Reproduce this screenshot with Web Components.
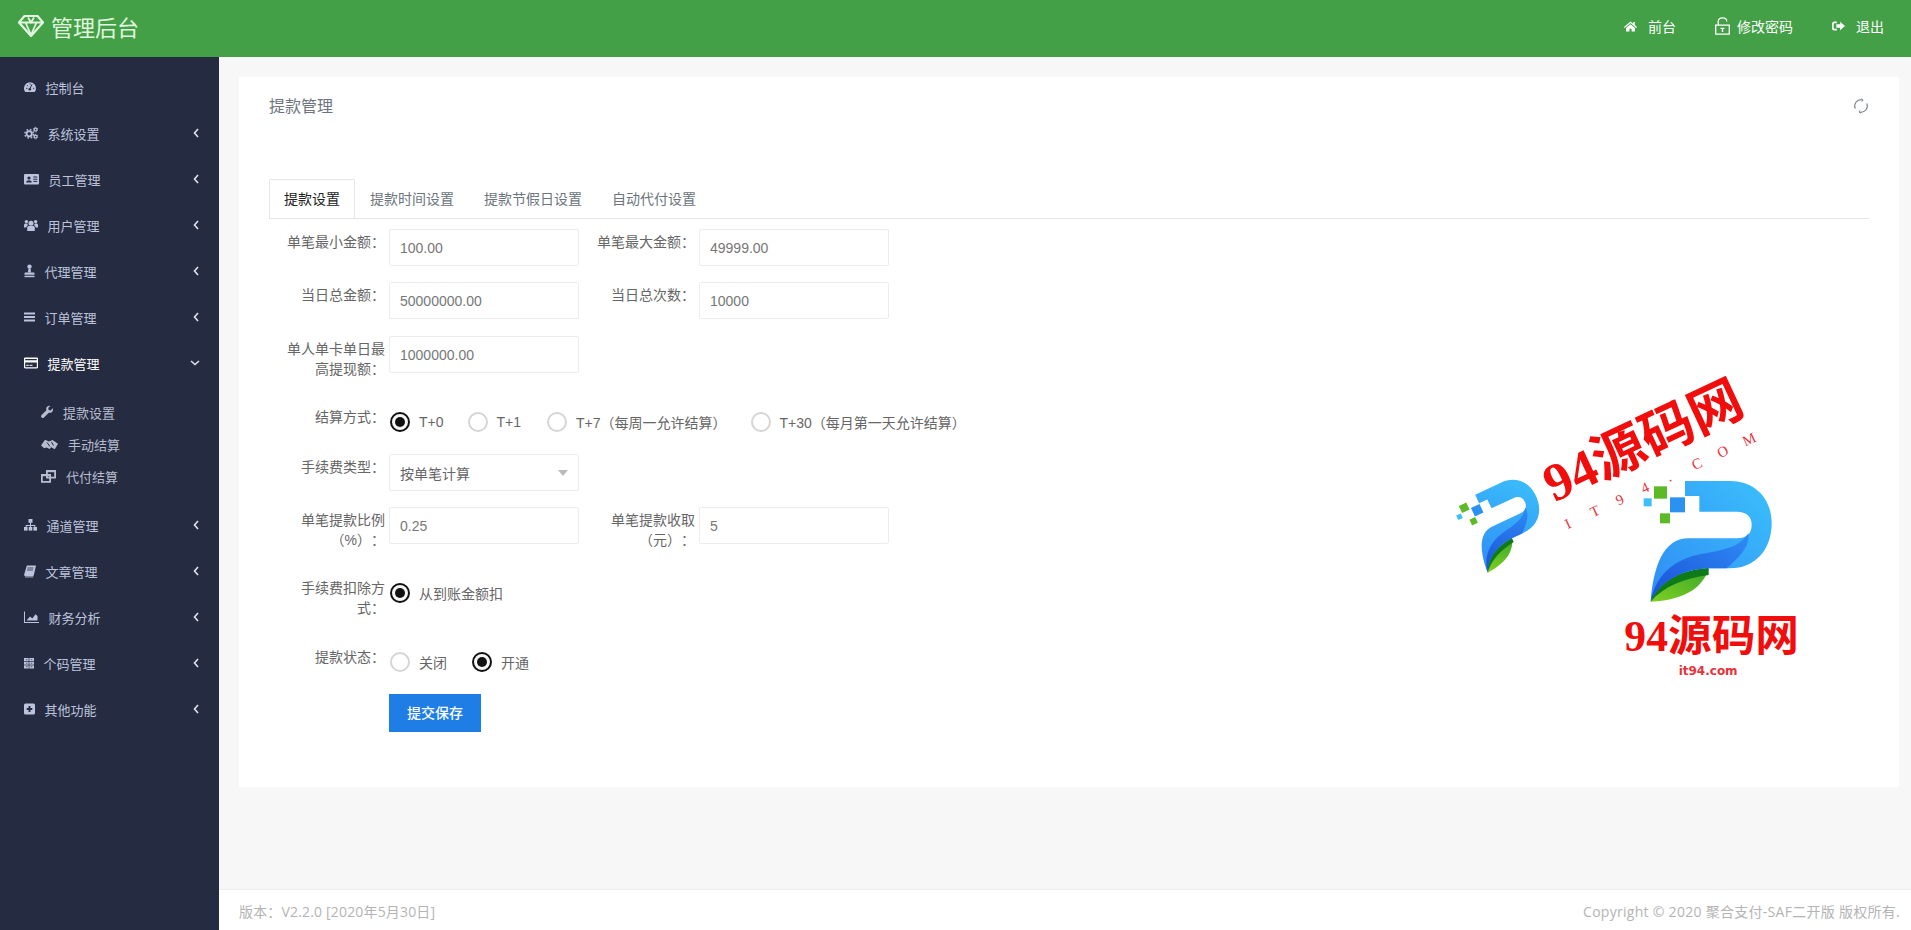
<!DOCTYPE html>
<html lang="zh">
<head>
<meta charset="utf-8">
<title>管理后台</title>
<style>
    html, body { margin: 0; height: 100%; overflow: hidden; }
    body {
        position: relative;
        font-family: "Liberation Sans", "Noto Sans CJK SC", sans-serif;
        font-size: 14px;
        background: #f7f7f7;
        text-spacing-trim: space-all;
    }
    .shell { display: grid; grid-template-rows: 57px 1fr; height: 930px; }
    .body { display: grid; grid-template-columns: 219px 1fr; min-height: 0; }
    .main { display: flex; flex-direction: column; min-width: 0; }
</style>
</head>
<body>
<div class="shell">
    <admin-header></admin-header>
    <div class="body">
        <side-nav>
            <nav-item icon="dashboard" label="控制台" plain></nav-item>
            <nav-item icon="cogs" label="系统设置"></nav-item>
            <nav-item icon="idcard" label="员工管理"></nav-item>
            <nav-item icon="users" label="用户管理"></nav-item>
            <nav-item icon="agent" label="代理管理"></nav-item>
            <nav-item icon="bars" label="订单管理"></nav-item>
            <nav-item icon="credit" label="提款管理" open>
                <nav-sub icon="wrench" label="提款设置"></nav-sub>
                <nav-sub icon="handshake" label="手动结算"></nav-sub>
                <nav-sub icon="clone" label="代付结算"></nav-sub>
            </nav-item>
            <nav-item icon="sitemap" label="通道管理"></nav-item>
            <nav-item icon="book" label="文章管理"></nav-item>
            <nav-item icon="chart" label="财务分析"></nav-item>
            <nav-item icon="qrcode" label="个码管理"></nav-item>
            <nav-item icon="plus" label="其他功能"></nav-item>
        </side-nav>
        <div class="main">
            <panel-card title="提款管理">
                <tab-bar>
                    <tab-item active>提款设置</tab-item>
                    <tab-item>提款时间设置</tab-item>
                    <tab-item>提款节假日设置</tab-item>
                    <tab-item>自动代付设置</tab-item>
                </tab-bar>
                <form-row>
                    <form-field label="单笔最小金额："><text-field>100.00</text-field></form-field>
                    <form-field label="单笔最大金额："><text-field>49999.00</text-field></form-field>
                </form-row>
                <form-row style="margin-bottom: 17px">
                    <form-field label="当日总金额："><text-field>50000000.00</text-field></form-field>
                    <form-field label="当日总次数："><text-field>10000</text-field></form-field>
                </form-row>
                <form-row>
                    <form-field label="单人单卡单日最高提现额："><text-field>1000000.00</text-field></form-field>
                </form-row>
                <form-row>
                    <form-field label="结算方式：">
                        <radio-group>
                            <radio-option checked>T+0</radio-option>
                            <radio-option style="margin-right: 2px">T+1</radio-option>
                            <radio-option>T+7（每周一允许结算）</radio-option>
                            <radio-option>T+30（每月第一天允许结算）</radio-option>
                        </radio-group>
                    </form-field>
                </form-row>
                <form-row>
                    <form-field label="手续费类型："><select-field>按单笔计算</select-field></form-field>
                </form-row>
                <form-row>
                    <form-field label="单笔提款比例（%）："><text-field>0.25</text-field></form-field>
                    <form-field label="单笔提款收取（元）："><text-field>5</text-field></form-field>
                </form-row>
                <form-row style="margin-bottom: 17px">
                    <form-field label="手续费扣除方式：">
                        <radio-group><radio-option checked>从到账金额扣</radio-option></radio-group>
                    </form-field>
                </form-row>
                <form-row>
                    <form-field label="提款状态：">
                        <radio-group>
                            <radio-option style="margin-right: 1px">关闭</radio-option>
                            <radio-option checked>开通</radio-option>
                        </radio-group>
                    </form-field>
                </form-row>
                <form-row>
                    <form-field><save-button>提交保存</save-button></form-field>
                </form-row>
            </panel-card>
            <page-footer></page-footer>
        </div>
    </div>
</div>
<water-mark></water-mark>

<script>
// icons are drawn 14 high, the width differs per icon like an icon font does
const ICONS = {
    dashboard: [12, `<path d="M6 2.2A6 6 0 0 0 0 8.2c0 1.5.5 2.8 1.3 3.8h9.4A6 6 0 0 0 12 8.2a6 6 0 0 0-6-6z"/><path d="M6 8.5 8 4.3M2 8.3h1.4M3 5.2l1 1M6 3.4v1.2M9 8.3h1.2" stroke="#252b40" stroke-width="1" fill="none"/><circle cx="5.8" cy="9.2" r="1.3" fill="#252b40"/>`],
    cogs: [14, `<g fill="none" stroke="currentColor"><circle cx="5.2" cy="7.8" r="2.6" stroke-width="1.8"/><circle cx="5.2" cy="7.8" r="4.3" stroke-width="1.5" stroke-dasharray="1.7 1.7"/><circle cx="11.6" cy="3.6" r="1.4" stroke-width="1.2"/><circle cx="11.6" cy="3.6" r="2.3" stroke-width="1" stroke-dasharray="1.1 1.1"/><circle cx="11.6" cy="10.6" r="1.4" stroke-width="1.2"/><circle cx="11.6" cy="10.6" r="2.3" stroke-width="1" stroke-dasharray="1.1 1.1"/></g>`],
    idcard: [15, `<rect y="2" width="15" height="10.5" rx="1"/><circle cx="5" cy="6" r="1.6" fill="#252b40"/><path d="M2.2 10.6c0-3 5.6-3 5.6 0z" fill="#252b40"/><path d="M9.3 5h4M9.3 7.2h4M9.3 9.4h4" stroke="#252b40" stroke-width="1"/>`],
    users: [14, `<circle cx="7" cy="5.2" r="2.5"/><path d="M3.2 13V9.8C3.2 8.4 4.4 8 5.2 8h3.6c.8 0 2 .4 2 1.8V13z"/><circle cx="2.4" cy="3.6" r="1.7"/><circle cx="11.6" cy="3.6" r="1.7"/><path d="M0 9.5V7c0-1 .8-1.6 1.6-1.6h1.6c.1.8.5 1.4 1 1.9-1 .3-1.8 1.1-1.8 2.2zM14 9.5V7c0-1-.8-1.6-1.6-1.6h-1.6c-.1.8-.5 1.4-1 1.9 1 .3 1.8 1.1 1.8 2.2z"/>`],
    agent: [11, `<circle cx="5.5" cy="2.6" r="2.2"/><path d="M4.4 4.4h2.2l.4 4H4z"/><path d="M1.5 8.6h8c.6 0 1 .4 1 1v1.2H.5V9.600c0-.6.4-1 1-1z"/><rect x=".5" y="11.700" width="10" height="1.500"/>`],
    bars: [11, `<rect y="2.500" width="11" height="2"/><rect y="6" width="11" height="2"/><rect y="9.500" width="11" height="2"/>`],
    credit: [14, `<path fill-rule="evenodd" d="M1.200 1.500h11.600c.7 0 1.200.5 1.200 1.200v8.600c0 .7-.5 1.200-1.200 1.200H1.200C.5 12.500 0 12 0 11.300V2.700c0-.7.5-1.200 1.200-1.200zM1.200 6.500v4.800h11.600V6.500zM1.200 3v1.200h11.600V3z"/><rect x="2.200" y="8.800" width="2.500" height="1"/><rect x="5.500" y="8.800" width="3" height="1"/>`],
    wrench: [12, `<path d="M11.800 3.300 9.600 5.400 7.700 5l-.5-1.900L9.300 1C7.500.4 5.500 1.500 5.200 3.400c-.1.700 0 1.300.2 1.900L.6 10.100c-.7.700-.7 1.800 0 2.400.7.700 1.700.7 2.400 0l4.800-4.800c2.300.7 4.700-1.200 4.200-4.400z"/>`],
    handshake: [17, `<path d="M0 8.500 4 2.800l4 1.600L11.500 3 17 6.800l-3.200 5.400-3.600-2-1.600 1.800-3-1.600-2.400.8z"/><path d="M6 5.500l3 4M10.500 5l2 3.500" stroke="#252b40" stroke-width="1" fill="none"/>`],
    clone: [15, `<g fill="none" stroke="currentColor" stroke-width="1.800"><rect x="5.900" y="1.900" width="8.200" height="6.700"/><rect x=".9" y="5.900" width="8.200" height="7"/></g><rect x="5" y="1" width="10" height="2.200"/><rect y="5" width="10" height="2.200"/>`],
    sitemap: [13, `<rect x="4.500" y="1" width="4" height="3.800"/><path d="M6 4.800h1v2.200h4.300v2h-1V8H7v1H6V8H2.700v1h-1V7H6z"/><rect y="9" width="3.600" height="3.600"/><rect x="4.700" y="9" width="3.600" height="3.600"/><rect x="9.400" y="9" width="3.600" height="3.600"/>`],
    book: [12, `<path d="M2.800 1.500H12L9.800 11.300c-.1.500-.5.800-1 .8H1.300c-.9 0-1.300-.7-1.100-1.500z"/><path d="M3.500 4h6M3 6h6" stroke="#252b40" stroke-width=".8"/><path d="M1 12.900h8.300" stroke="currentColor" stroke-width="1"/>`],
    chart: [15, `<path d="M0 1.500h1V12h14v1H0z"/><path d="M2.500 10.500 6 6.500l2.300 2 3.200-4.300 2 1.800v4.500z"/>`],
    qrcode: [10, `<rect y="2" width="10" height="10.500"/><path d="M0 5.500h10M0 9h10M5 2v10.500M2 3.700h1.500M6.800 3.700h1.500M2 7.200h1.500M6.800 7.200h1.500M2 10.700h1.500M6.800 10.700h1.500" stroke="#252b40" stroke-width=".7"/>`],
    plus: [11, `<rect y="1.500" width="11" height="11" rx="1.500"/><path d="M5.500 4v6M2.700 7h5.600" stroke="#252b40" stroke-width="1.900"/>`],
    home: [13, `<path d="M6.500 2.500 0 8l.8.900 5.700-4.800 5.700 4.800.8-.9-2.200-1.900V3h-1.600v1.700z"/><path d="M6.500 5.200 2 9v3.500h3.400V9.800h2.200v2.700H11V9z"/>`],
    unlock: [15, `<path fill="none" stroke="currentColor" stroke-width="1.300" d="M.7 8.200h13.600v9H.7zM3.200 8V4.500C3.200 2.300 5 .8 7.500.8s4.300 1.500 4.300 3.700"/><path d="M5.500 10.800h4v1.200h-1.300v3h-1.400v-3H5.500z"/>`],
    signout: [13, `<path d="M4.800 2.500H2.300C1 2.500 0 3.500 0 4.800v4.400c0 1.300 1 2.300 2.300 2.300h2.500v-1.700H2.500c-.4 0-.8-.3-.8-.8V5c0-.5.4-.8.8-.8h2.300z"/><path d="M8 2.800 13 7l-5 4.200V8.800H4.300V5.200H8z"/>`]
};

function iconSvg(name, height = 14) {
    const [width, body] = ICONS[name];
    const vb = name === 'unlock' ? `0 0 ${width} 18` : `0 0 ${width} 14`;
    const h = name === 'unlock' ? 18 : height;
    return `<svg width="${width}" height="${h}" viewBox="${vb}" fill="currentColor">${body}</svg>`;
}

class AdminHeader extends HTMLElement {
    constructor() {
        super();
        this.attachShadow({ mode: 'open' });
    }

    connectedCallback() {
        this.shadowRoot.innerHTML = `
            <style>
                :host {
                    display: flex;
                    align-items: center;
                    justify-content: space-between;
                    background: #43a047;
                    color: #fff;
                    padding: 0 27px 5px 18px;
                }
                .brand { display: flex; align-items: center; gap: 7px; font-size: 22px; color: #e2f7df; }
                .menu { display: flex; align-items: center; gap: 39px; font-size: 14px; }
                .menu span { display: flex; align-items: center; gap: 11px; }
                .menu .lock { gap: 7px; }
            </style>
            <div class="brand">
                <svg width="26" height="22" viewBox="0 0 26 22">
                    <path d="M6.500 1h13L25 7.500 13 21 1 7.500z" fill="none" stroke="#e2f7df" stroke-width="2.200" stroke-linejoin="round"/>
                    <path d="M1.500 7.500h23M7.500 7.500 13 20l5.500-12.500M10 2.500l3 5 3-5" fill="none" stroke="#e2f7df" stroke-width="1.800"/>
                </svg>
                <span>管理后台</span>
            </div>
            <div class="menu">
                <span>${iconSvg('home')}前台</span>
                <span class="lock">${iconSvg('unlock')}修改密码</span>
                <span>${iconSvg('signout')}退出</span>
            </div>
        `;
    }
}
customElements.define('admin-header', AdminHeader);

class SideNav extends HTMLElement {
    constructor() {
        super();
        this.attachShadow({ mode: 'open' }).innerHTML = `
            <style>
                :host {
                    display: block;
                    background: #252b40;
                    padding-top: 7px;
                    color: #bcc3dc;
                    font-size: 13px;
                }
            </style>
            <slot></slot>
        `;
    }
}
customElements.define('side-nav', SideNav);

class NavItem extends HTMLElement {
    constructor() {
        super();
        this.attachShadow({ mode: 'open' });
    }

    connectedCallback() {
        const open = this.hasAttribute('open');
        let arrow = '<svg width="6" height="10" viewBox="0 0 6 10"><path d="M5 1 1.500 5 5 9" fill="none" stroke="currentColor" stroke-width="1.600"/></svg>';
        if (open) {
            arrow = '<svg width="10" height="6" viewBox="0 0 10 6"><path d="M1 1l4 3.500L9 1" fill="none" stroke="currentColor" stroke-width="1.600"/></svg>';
        }
        if (this.hasAttribute('plain')) arrow = '';

        this.shadowRoot.innerHTML = `
            <style>
                :host { display: block; }
                .row {
                    height: 46px;
                    display: flex;
                    align-items: center;
                    gap: 9.500px;
                    padding: 0 ${open ? 19 : 20}px 0 24px;
                }
                .row.open { color: #fff; }
                .text { flex: 1; }
                .arrow { display: flex; color: #dfe3f0; }
                .subs { padding: 10px 0; }
            </style>
            <div class="row ${open ? 'open' : ''}">
                ${iconSvg(this.getAttribute('icon'))}
                <span class="text">${this.getAttribute('label')}</span>
                <span class="arrow">${arrow}</span>
            </div>
            ${open ? '<div class="subs"><slot></slot></div>' : ''}
        `;
    }
}
customElements.define('nav-item', NavItem);

class NavSub extends HTMLElement {
    constructor() {
        super();
        this.attachShadow({ mode: 'open' });
    }

    connectedCallback() {
        this.shadowRoot.innerHTML = `
            <style>
                :host {
                    display: flex;
                    align-items: center;
                    gap: 10px;
                    height: 32px;
                    padding-left: 41px;
                    color: #b7bdcf;
                }
            </style>
            ${iconSvg(this.getAttribute('icon'))}
            <span>${this.getAttribute('label')}</span>
        `;
    }
}
customElements.define('nav-sub', NavSub);

class PanelCard extends HTMLElement {
    constructor() {
        super();
        this.attachShadow({ mode: 'open' });
    }

    connectedCallback() {
        this.shadowRoot.innerHTML = `
            <style>
                :host {
                    display: block;
                    background: #fff;
                    margin: 20px 12px 0 20px;
                    padding: 0 30px;
                    height: 710px;
                    box-sizing: border-box;
                }
                .head {
                    height: 102px;
                    display: flex;
                    justify-content: space-between;
                    align-items: flex-start;
                    padding-top: 18px;
                    box-sizing: border-box;
                    font-size: 16px;
                    line-height: 24px;
                    color: #6c757d;
                }
                svg { margin-top: 3px; }
            </style>
            <div class="head">
                <span>${this.getAttribute('title')}</span>
                <svg width="16" height="16" viewBox="0 0 16 16" fill="none" stroke="#6c757d" stroke-width="1.100">
                    <path d="M2.300 10.500A6.200 6.200 0 0 1 9.500 2"/>
                    <path d="M13.700 5.500A6.200 6.200 0 0 1 6.500 14"/>
                    <path d="M8.500 .8 10 2.100 8.800 3.600M7.500 15.200 6 13.900l1.200-1.500" stroke-width=".9"/>
                </svg>
            </div>
            <slot></slot>
        `;
    }
}
customElements.define('panel-card', PanelCard);

class TabBar extends HTMLElement {
    constructor() {
        super();
        this.attachShadow({ mode: 'open' }).innerHTML = `
            <style>
                :host {
                    display: flex;
                    box-sizing: border-box;
                    border-bottom: 1px solid #e4e6e8;
                    margin-bottom: 10px;
                    height: 40px;
                }
            </style>
            <slot></slot>
        `;
    }
}
customElements.define('tab-bar', TabBar);

class TabItem extends HTMLElement {
    constructor() {
        super();
        this.attachShadow({ mode: 'open' }).innerHTML = `
            <style>
                :host {
                    display: block;
                    box-sizing: border-box;
                    padding: 0 15px;
                    line-height: 38px;
                    height: 39px;
                    color: #6c757d;
                    border: 1px solid transparent;
                    border-bottom: 0;
                    margin: 0 -1px;
                }
                :host([active]) {
                    color: #222;
                    background: #fff;
                    border-color: #e4e6e8;
                    border-radius: 2px 2px 0 0;
                    margin: 0;
                    padding: 0 14px;
                }
            </style>
            <slot></slot>
        `;
    }
}
customElements.define('tab-item', TabItem);

class FormRow extends HTMLElement {
    constructor() {
        super();
        this.attachShadow({ mode: 'open' }).innerHTML = `
            <style>
                :host { display: flex; margin-bottom: 16px; }
            </style>
            <slot></slot>
        `;
    }
}
customElements.define('form-row', FormRow);

class FormField extends HTMLElement {
    constructor() {
        super();
        this.attachShadow({ mode: 'open' });
    }

    connectedCallback() {
        this.shadowRoot.innerHTML = `
            <style>
                :host {
                    display: grid;
                    grid-template-columns: 116px auto;
                    column-gap: 4px;
                    color: #666;
                }
                label {
                    text-align: right;
                    line-height: 20px;
                    padding: 3px 0 9px 11px;
                }
            </style>
            <label>${this.getAttribute('label') || ''}</label>
            <slot></slot>
        `;
    }
}
customElements.define('form-field', FormField);

class TextField extends HTMLElement {
    constructor() {
        super();
        this.attachShadow({ mode: 'open' }).innerHTML = `
            <style>
                :host {
                    display: block;
                    width: 190px;
                    height: 37px;
                    box-sizing: border-box;
                    border: 1px solid #ebedef;
                    border-radius: 2px;
                    padding: 0 10px;
                    line-height: 37px;
                    color: #777;
                }
            </style>
            <slot></slot>
        `;
    }
}
customElements.define('text-field', TextField);

class SelectField extends HTMLElement {
    constructor() {
        super();
        this.attachShadow({ mode: 'open' }).innerHTML = `
            <style>
                :host {
                    display: flex;
                    align-items: center;
                    justify-content: space-between;
                    width: 190px;
                    height: 37px;
                    box-sizing: border-box;
                    border: 1px solid #ebedef;
                    border-radius: 2px;
                    padding: 0 10px;
                    color: #666;
                }
                i {
                    width: 0;
                    height: 0;
                    border: 5.500px solid transparent;
                    border-top: 6px solid #bbb;
                    border-bottom: 0;
                }
            </style>
            <span><slot></slot></span>
            <i></i>
        `;
    }
}
customElements.define('select-field', SelectField);

class RadioGroup extends HTMLElement {
    constructor() {
        super();
        this.attachShadow({ mode: 'open' }).innerHTML = `
            <style>
                :host { display: flex; gap: 24px; height: 34px; align-items: center; padding-left: 1px; padding-top: 2px; box-sizing: border-box; }
            </style>
            <slot></slot>
        `;
    }
}
customElements.define('radio-group', RadioGroup);

class RadioOption extends HTMLElement {
    constructor() {
        super();
        this.attachShadow({ mode: 'open' }).innerHTML = `
            <style>
                :host { display: flex; align-items: center; gap: 9px; color: #666; white-space: nowrap; }
                i {
                    width: 20px;
                    height: 20px;
                    box-sizing: border-box;
                    border: 2px solid #d5d5d5;
                    border-radius: 50%;
                    display: flex;
                    align-items: center;
                    justify-content: center;
                    background: #fff;
                }
                b { display: none; width: 10px; height: 10px; border-radius: 50%; background: #111; }
                :host([checked]) i { border-color: #111; background: #f6f6f6; }
                :host([checked]) b { display: block; }
            </style>
            <i><b></b></i>
            <span><slot></slot></span>
        `;
    }
}
customElements.define('radio-option', RadioOption);

class SaveButton extends HTMLElement {
    constructor() {
        super();
        this.attachShadow({ mode: 'open' }).innerHTML = `
            <style>
                :host {
                    display: block;
                    width: 92px;
                    height: 38px;
                    line-height: 38px;
                    text-align: center;
                    background: #1e7ee6;
                    color: #fff;
                    font-weight: 500;
                }
            </style>
            <slot></slot>
        `;
    }
}
customElements.define('save-button', SaveButton);

class PageFooter extends HTMLElement {
    constructor() {
        super();
        this.attachShadow({ mode: 'open' });
    }

    connectedCallback() {
        this.shadowRoot.innerHTML = `
            <style>
                :host {
                    margin-top: auto;
                    height: 41px;
                    box-sizing: border-box;
                    display: flex;
                    align-items: center;
                    justify-content: space-between;
                    background: #fff;
                    border-top: 1px solid #eee;
                    padding: 2px 11px 0 20px;
                    color: #b4b4b4;
                    font-family: "Open Sans", "Noto Sans CJK SC", sans-serif;
                }
                .ver { letter-spacing: .17px; }
                .copy { letter-spacing: .28px; }
            </style>
            <span class="ver">版本：V2.2.0 [2020年5月30日]</span>
            <span class="copy">Copyright © 2020 聚合支付-SAF二开版 版权所有.</span>
        `;
    }
}
customElements.define('page-footer', PageFooter);

// the watermark sits on top of the page, drawn in 3x coordinates of its own box
class WaterMark extends HTMLElement {
    constructor() {
        super();
        this.attachShadow({ mode: 'open' });
    }

    connectedCallback() {
        this.shadowRoot.innerHTML = `
            <style>
                :host {
                    position: absolute;
                    left: 1440px;
                    top: 370px;
                    width: 380px;
                    height: 320px;
                    pointer-events: none;
                }
                .cn { font-family: "Liberation Serif", "Noto Sans CJK SC", serif; font-weight: 700; fill: #f20d0d; }
            </style>
            <svg width="380" height="320" viewBox="0 0 1140 960">
                <defs>
                    <linearGradient id="body" x1="0" y1="1" x2="1" y2="0">
                        <stop offset="0" stop-color="#2f8cf5"/>
                        <stop offset="1" stop-color="#3bc0fb"/>
                    </linearGradient>
                    <linearGradient id="deep" x1="0" y1="1" x2="1" y2="0">
                        <stop offset="0" stop-color="#1a4fd8"/>
                        <stop offset="1" stop-color="#2f8cf5"/>
                    </linearGradient>
                    <linearGradient id="leaf" x1="0" y1="1" x2="1" y2="0">
                        <stop offset="0" stop-color="#7fd01f"/>
                        <stop offset="1" stop-color="#3aa82c"/>
                    </linearGradient>
                    <g id="logo">
                        <rect x="642" y="349" width="39" height="37" fill="#5cba26"/>
                        <rect x="690" y="382" width="45" height="45" fill="#2c92f2"/>
                        <rect x="611" y="385" width="24" height="24" fill="#3cc0f8"/>
                        <rect x="660" y="430" width="30" height="30" fill="#5cba26"/>
                        <path d="M632 695C668 640 730 610 806 597 790 645 745 690 632 695z" fill="url(#leaf)"/>
                        <path d="M632 695C650 640 695 605 806 593V615C730 625 670 650 632 695z" fill="#0f7a18"/>
                        <path d="M735 333H870C945 333 995 385 995 460 995 540 945 595 870 595H800C730 600 660 630 632 695 640 590 670 505 745 505H890C920 505 935 490 935 465 935 440 920 425 890 425H778V378H735z" fill="url(#body)"/>
                        <path d="M632 695C645 625 690 575 770 555 850 540 895 535 925 490 930 530 900 560 860 595H800C730 600 660 630 632 695z" fill="url(#deep)"/>
                    </g>
                </defs>
                <use href="#logo"/>
                <use href="#logo" transform="translate(143 608) rotate(-25) scale(.63) translate(-632 -695)"/>
                <text class="cn" transform="translate(342 398) rotate(-25)" font-size="160">94源码网</text>
                <text transform="translate(383 478) rotate(-25)" x="0 84 168 252 336 420 504 588" fill="#e8323a" font-family="Liberation Serif, serif" font-size="44">IT94.COM</text>
                <text class="cn" x="553" y="843" font-size="131">94源码网</text>
                <text x="716" y="914" fill="#e8323a" font-family="DejaVu Sans, sans-serif" font-weight="700" font-size="36">it94.com</text>
            </svg>
        `;
    }
}
customElements.define('water-mark', WaterMark);
</script>
</body>
</html>
